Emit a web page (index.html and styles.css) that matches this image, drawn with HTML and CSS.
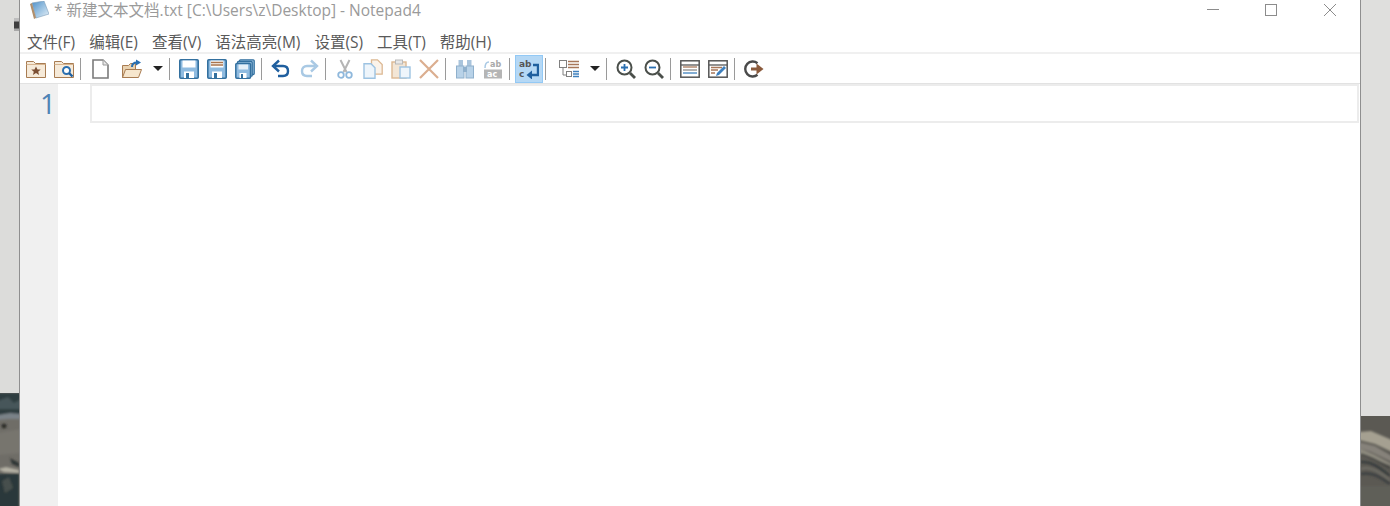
FILE: index.html
```html
<!DOCTYPE html>
<html lang="zh-CN">
<head>
    <meta charset="UTF-8">
    <meta name="viewport" content="width=device-width, initial-scale=1.0">
    <title>Notepad4</title>
    <link rel="stylesheet" href="styles.css">
</head>
<body>
    <div class="desk desk-left">
        <span class="desk-icon"></span>
        <!-- bit of the rocks in the wallpaper -->
        <svg class="rocks" width="19" height="113" viewBox="0 0 19 113">
            <defs><filter id="soft"><feGaussianBlur stdDeviation="1"/></filter></defs>
            <rect width="19" height="113" fill="#6f6d67"/>
            <g filter="url(#soft)">
                <rect x="-2" y="0" width="23" height="22" fill="#2e3c3f"/>
                <path d="M-2 8L8 4L14 10L21 6V16H-2Z" fill="#47565a"/>
                <path d="M-2 22L10 20L21 21V26L8 26L-2 27Z" fill="#7a8288"/>
                <circle cx="4" cy="33" r="2.500" fill="#2e2e2c"/>
                <path d="M-2 40L21 36V60L-2 62Z" fill="#77756e"/>
                <path d="M10 65L19 70V74L12 71Z" fill="#2f3534"/>
                <path d="M-2 76L6 74L19 77V80L4 79Z" fill="#b5b2a5"/>
                <path d="M-2 81L19 80V115H-2Z" fill="#2c393a"/>
                <path d="M2 88L9 84L13 95L5 100Z" fill="#46504d"/>
            </g>
        </svg>
    </div>

    <div class="window">
        <div class="titlebar">
            <svg class="app-icon" viewBox="0 0 20 18">
                <defs>
                    <linearGradient id="page" x1="0" y1="0" x2="1" y2="1">
                        <stop offset="0" stop-color="#4f90c8"/>
                        <stop offset=".6" stop-color="#a9cbe6"/>
                        <stop offset="1" stop-color="#e8f0f7"/>
                    </linearGradient>
                </defs>
                <path d="M3 2L15 0L20 13L7 17Z" fill="url(#page)" stroke="#7b9cb8" stroke-width=".6"/>
                <path d="M1 3L3 2L7 17L5 18Z" fill="#b08f6c"/>
            </svg>
            <span class="title-text">* 新建文本文档.txt [C:\Users\z\Desktop] - Notepad4</span>
            <div class="win-controls">
                <svg class="win-btn win-min" viewBox="0 0 12 12"><path d="M0 5.500H12" stroke="#8c8c8c"/></svg>
                <svg class="win-btn" viewBox="0 0 12 12"><rect x=".5" y=".5" width="11" height="11" fill="none" stroke="#8c8c8c"/></svg>
                <svg class="win-btn" viewBox="0 0 12 12"><path d="M0 0L12 12M12 0L0 12" stroke="#8c8c8c"/></svg>
            </div>
        </div>

        <div class="menubar">
            <span>文件(F)</span>
            <span>编辑(E)</span>
            <span>查看(V)</span>
            <span>语法高亮(M)</span>
            <span>设置(S)</span>
            <span>工具(T)</span>
            <span>帮助(H)</span>
        </div>

        <div class="toolbar">
            <div class="tb-btn">
                <svg class="ico" viewBox="0 0 20 20">
                    <path d="M.5 2.500h7l2 2h10v14H.5z" fill="#f6ead9" stroke="#a87c52"/>
                    <path d="M.5 5.500h19" stroke="#d6b48f"/>
                    <path d="M10 7.500l1.500 3h3.200l-2.500 2.200.9 3.200-3.100-1.800-3.100 1.800.9-3.200-2.500-2.200h3.200z" fill="#7c4f33"/>
                </svg>
            </div>
            <div class="tb-btn">
                <svg class="ico" viewBox="0 0 20 20">
                    <path d="M.5 2.500h7l2 2h10v14H.5z" fill="#f6ead9" stroke="#a87c52"/>
                    <path d="M.5 5.500h19" stroke="#d6b48f"/>
                    <circle cx="12.500" cy="11.500" r="3.500" fill="#fff" stroke="#2a6fb0" stroke-width="2"/>
                    <path d="M15 14l3.500 3.500" stroke="#1f5f9f" stroke-width="2.400"/>
                </svg>
            </div>
            <div class="tb-sep"></div>
            <div class="tb-btn">
                <svg class="ico" viewBox="0 0 20 20">
                    <path d="M3 1h10l5 5v13H3z" fill="#fff" stroke="#7b7b7b" stroke-width="1.600"/>
                    <path d="M13 1v5h5" fill="#e8e8e8" stroke="#9a9a9a"/>
                </svg>
            </div>
            <div class="tb-drop">
                <svg class="ico" viewBox="0 0 20 20">
                    <path d="M.5 6.500h6l2-2h5v14H.5z" fill="#e9d2b0" stroke="#a87c52"/>
                    <path d="M.5 18.500l3-8h16l-3 8z" fill="#f6e6cd" stroke="#a87c52"/>
                    <path d="M10 8c0-3 2-4.500 5-4.500" fill="none" stroke="#2a6fb0" stroke-width="2"/>
                    <path d="M14 .5l5 3-5 3z" fill="#2a6fb0"/>
                </svg>
                <span class="caret"></span>
            </div>
            <div class="tb-sep"></div>
            <div class="tb-btn">
                <svg class="ico" viewBox="0 0 20 20">
                    <rect x=".8" y=".8" width="18.400" height="18.400" rx="1" fill="#8fbbe0" stroke="#33709f" stroke-width="1.600"/>
                    <rect x="3.500" y="1.500" width="13" height="7" fill="#fff"/>
                    <rect x="5" y="12.500" width="10" height="6.500" fill="#fff"/>
                    <rect x="7" y="14" width="3" height="5" fill="#33709f"/>
                </svg>
            </div>
            <div class="tb-btn">
                <svg class="ico" viewBox="0 0 20 20">
                    <rect x=".8" y=".8" width="18.400" height="18.400" rx="1" fill="#8fbbe0" stroke="#33709f" stroke-width="1.600"/>
                    <rect x="3.500" y="1.500" width="13" height="7" fill="#fff"/>
                    <path d="M4 3.500h12M4 6h12" stroke="#a9744e" stroke-width="1.300"/>
                    <rect x="5" y="12.500" width="10" height="6.500" fill="#fff"/>
                    <rect x="7" y="14" width="3" height="5" fill="#33709f"/>
                </svg>
            </div>
            <div class="tb-btn">
                <svg class="ico" viewBox="0 0 20 20">
                    <rect x="4.500" y=".8" width="14.700" height="14.700" rx="1" fill="#a9cbe6" stroke="#33709f" stroke-width="1.300"/>
                    <rect x="2.500" y="2.500" width="14.700" height="14.700" rx="1" fill="#a9cbe6" stroke="#33709f" stroke-width="1.300"/>
                    <rect x=".8" y="4.500" width="14.700" height="14.700" rx="1" fill="#8fbbe0" stroke="#33709f" stroke-width="1.500"/>
                    <rect x="3.500" y="5.500" width="9.500" height="5" fill="#e6f0f8"/>
                    <rect x="4.500" y="14" width="7" height="5" fill="#fff"/>
                    <rect x="6" y="15" width="2" height="4" fill="#33709f"/>
                </svg>
            </div>
            <div class="tb-sep"></div>
            <div class="tb-btn">
                <svg class="ico" viewBox="0 0 20 20">
                    <path d="M4 7h8c3 0 5 2 5 5s-2 5-5 5H7" fill="none" stroke="#1f5f9f" stroke-width="2.400"/>
                    <path d="M8 1.500L2 7l6 5.500" fill="none" stroke="#1f5f9f" stroke-width="2.400"/>
                </svg>
            </div>
            <div class="tb-btn">
                <svg class="ico" viewBox="0 0 20 20">
                    <path d="M16 7H8c-3 0-5 2-5 5s2 5 5 5h5" fill="none" stroke="#a9c9e4" stroke-width="2.400"/>
                    <path d="M12 1.500L18 7l-6 5.500" fill="none" stroke="#a9c9e4" stroke-width="2.400"/>
                </svg>
            </div>
            <div class="tb-sep"></div>
            <div class="tb-btn">
                <svg class="ico" viewBox="0 0 20 20">
                    <path d="M5.500 1l6 12M14.500 1l-6 12" stroke="#b5b5b5" stroke-width="2"/>
                    <circle cx="6" cy="16" r="2.800" fill="#fff" stroke="#8fb8dc" stroke-width="1.800"/>
                    <circle cx="14" cy="16" r="2.800" fill="#fff" stroke="#8fb8dc" stroke-width="1.800"/>
                </svg>
            </div>
            <div class="tb-btn">
                <svg class="ico" viewBox="0 0 20 20">
                    <path d="M8.500 .8h6l4.700 4.700v9.700H8.500z" fill="#fbf3ea" stroke="#dcb893" stroke-width="1.300"/>
                    <path d="M1 4.800h7l4 4v10.400H1z" fill="#eef5fb" stroke="#9dc3e2" stroke-width="1.400"/>
                </svg>
            </div>
            <div class="tb-btn">
                <svg class="ico" viewBox="0 0 20 20">
                    <rect x="1" y="3" width="14" height="16" fill="#f3e6d6" stroke="#dcb893" stroke-width="1.400"/>
                    <rect x="4.500" y="1" width="7" height="4" fill="#e8e8e8" stroke="#b9b9b9"/>
                    <rect x="9" y="8" width="10" height="11" fill="#eef5fb" stroke="#9dc3e2" stroke-width="1.400"/>
                </svg>
            </div>
            <div class="tb-btn">
                <svg class="ico" viewBox="0 0 20 20">
                    <path d="M1 1l18 18M19 1L1 19" stroke="#dbae8f" stroke-width="2.200"/>
                </svg>
            </div>
            <div class="tb-sep"></div>
            <div class="tb-btn">
                <svg class="ico" viewBox="0 0 20 20">
                    <rect x="3.500" y="1" width="4.500" height="6" fill="#a9c4dc"/>
                    <rect x="12" y="1" width="4.500" height="6" fill="#a9c4dc"/>
                    <rect x="1.500" y="7" width="7.500" height="12" fill="#b8d2e8" stroke="#8fb0cc"/>
                    <rect x="11" y="7" width="7.500" height="12" fill="#b8d2e8" stroke="#8fb0cc"/>
                    <rect x="8" y="8" width="4" height="5" fill="#8fb0cc"/>
                </svg>
            </div>
            <div class="tb-btn">
                <svg class="ico" viewBox="0 0 20 20">
                    <text class="ico-text" x="7" y="8" fill="#a9a9a9">ab</text>
                    <path d="M2 9c0-4 1-6 4-6" fill="none" stroke="#a9c9e4" stroke-width="1.500"/>
                    <rect x="1" y="10.500" width="18" height="9" fill="#b5b5b5"/>
                    <text class="ico-text" x="4" y="18" fill="#fff">ac</text>
                </svg>
            </div>
            <div class="tb-sep"></div>
            <div class="tb-btn active">
                <svg class="ico" viewBox="0 0 20 20">
                    <text class="ico-text ico-text-lg" x="0" y="8" fill="#555">ab</text>
                    <text class="ico-text ico-text-lg" x="0" y="18" fill="#555">c</text>
                    <path d="M14 6h5v10h-7" fill="none" stroke="#1f5f9f" stroke-width="2.400"/>
                    <path d="M13 11.500l-5.500 4.500 5.500 4.500z" fill="#1f5f9f"/>
                </svg>
            </div>
            <div class="tb-sep"></div>
            <div class="tb-drop">
                <svg class="ico" viewBox="0 0 20 20">
                    <rect x=".5" y="1.500" width="7" height="7" fill="#fff" stroke="#808080"/>
                    <path d="M4 9v7h3" fill="none" stroke="#808080"/>
                    <rect x="7.500" y="12.500" width="5" height="5" fill="#fff" stroke="#808080"/>
                    <path d="M9 2.500h11M9 5.500h11M9 8.500h11" stroke="#a8775a" stroke-width="1.500"/>
                    <path d="M14 12.500h6M14 15h6M14 17.500h6" stroke="#3f80bd" stroke-width="1.400"/>
                </svg>
                <span class="caret"></span>
            </div>
            <div class="tb-sep"></div>
            <div class="tb-btn">
                <svg class="ico" viewBox="0 0 20 20">
                    <circle cx="8.500" cy="8.500" r="7" fill="#fff" stroke="#4a4f4a" stroke-width="2"/>
                    <path d="M14 14l5 5" stroke="#4a4f4a" stroke-width="2.800"/>
                    <path d="M5 8.500h7M8.500 5v7" stroke="#2a6fb0" stroke-width="1.800"/>
                </svg>
            </div>
            <div class="tb-btn">
                <svg class="ico" viewBox="0 0 20 20">
                    <circle cx="8.500" cy="8.500" r="7" fill="#fff" stroke="#4a4f4a" stroke-width="2"/>
                    <path d="M14 14l5 5" stroke="#4a4f4a" stroke-width="2.800"/>
                    <path d="M5 8.500h7" stroke="#2a6fb0" stroke-width="1.800"/>
                </svg>
            </div>
            <div class="tb-sep"></div>
            <div class="tb-btn">
                <svg class="ico" viewBox="0 0 20 20">
                    <rect x=".8" y="1.800" width="18.400" height="16.400" fill="#fff" stroke="#555" stroke-width="1.500"/>
                    <path d="M1 6h18" stroke="#555" stroke-width="1.300"/>
                    <path d="M3 8h14" stroke="#a8775a" stroke-width="1.300"/>
                    <path d="M3 11h14" stroke="#8a8a8a" stroke-width="1.300"/>
                    <path d="M3 14h14" stroke="#3f80bd" stroke-width="1.300"/>
                </svg>
            </div>
            <div class="tb-btn">
                <svg class="ico" viewBox="0 0 20 20">
                    <rect x=".8" y="1.800" width="18.400" height="16.400" fill="#fff" stroke="#555" stroke-width="1.500"/>
                    <path d="M1 6h18" stroke="#555" stroke-width="1.300"/>
                    <path d="M3 8.500h11M3 11h7M3 14h4" stroke="#a8775a" stroke-width="1.300"/>
                    <path d="M8 17l1-3 7-7 2 2-7 7z" fill="#3f80bd"/>
                </svg>
            </div>
            <div class="tb-sep"></div>
            <div class="tb-btn">
                <svg class="ico" viewBox="0 0 20 20">
                    <path d="M13.500 4.200A7.500 7.500 0 1 0 13.500 15.800" fill="none" stroke="#4a4a4a" stroke-width="2.400"/>
                    <path d="M7 10h6" stroke="#8a5a3c" stroke-width="3"/>
                    <path d="M12.500 4.500l7 5.500-7 5.500z" fill="#8a5a3c"/>
                </svg>
            </div>
        </div>

        <div class="editor">
            <div class="gutter">1</div>
            <div class="text-area">
                <div class="current-line"></div>
            </div>
        </div>
    </div>

    <div class="desk desk-right">
        <svg class="rocks" width="29" height="90" viewBox="0 0 29 90">
            <rect width="29" height="90" fill="#5b5953"/>
            <g filter="url(#soft)">
                <path d="M-2 16L10 15L31 24V36L14 28L-2 24Z" fill="#a5a091"/>
                <path d="M-2 26L14 30L31 40V46L10 36L-2 32Z" fill="#86827a"/>
                <path d="M-2 32L12 38L31 48V50L10 42L-2 38Z" fill="#8f8c80"/>
                <path d="M0 38C8 40 16 44 29 52" fill="none" stroke="#3a3c3a" stroke-width="1.500"/>
                <path d="M0 46C10 45 18 51 29 60" fill="none" stroke="#33383a" stroke-width="2"/>
                <path d="M0 53C8 50 16 54 29 64" fill="none" stroke="#77766e" stroke-width="1.500"/>
                <path d="M0 58C10 56 18 60 29 68" fill="none" stroke="#3c4042" stroke-width="2.500"/>
                <rect x="-2" y="70" width="33" height="22" fill="#5f5e59"/>
            </g>
        </svg>
    </div>
</body>
</html>
```

FILE: styles.css
```css
* {
    margin: 0;
    padding: 0;
    box-sizing: border-box;
}

html, body {
    height: 100%;
    overflow: hidden;
}

body {
    display: flex;
    background: #dcdcda;
    font-family: "Open Sans", "Noto Sans CJK SC", sans-serif;
}

/* desktop wallpaper strips either side of the window */
.desk {
    position: relative;
    height: 100%;
}

.desk-left {
    width: 19px;
    background: #dcdcda;
}

.desk-right {
    flex: 1;
    background: #dfdfdd;
}

.desk-icon {
    position: absolute;
    top: 18px;
    right: 0;
    width: 5px;
    height: 13px;
    background: linear-gradient(180deg, #bdbdbd 0, #bdbdbd 3px, #3f3f3f 4px, #3f3f3f 10px, #a8a8a8 11px);
}

.rocks {
    position: absolute;
    left: 0;
    bottom: 0;
    display: block;
}

.window {
    width: 1342px;
    height: 100%;
    background: #fff;
    border-left: 1px solid #8f8f8f;
    border-right: 1px solid #8f8f8f;
    display: flex;
    flex-direction: column;
}

.titlebar {
    height: 32px;
    display: flex;
    align-items: flex-start;
    padding-left: 9px;
}

.app-icon {
    width: 20px;
    height: 18px;
    margin-top: 1px;
}

.title-text {
    margin-left: 5px;
    font-size: 15.5px;
    line-height: 20px;
    color: #9a9a9a;
    white-space: nowrap;
}

.win-controls {
    margin-left: auto;
    margin-right: 24px;
    margin-top: 4px;
    display: flex;
    gap: 47px;
}

.win-btn {
    width: 12px;
    height: 12px;
}

.win-min {
    margin-right: -1px;
}

.menubar {
    height: 22px;
    display: flex;
    gap: 14px;
    padding-left: 7px;
    font-size: 15.5px;
    line-height: 20px;
    color: #5a5a5a;
    border-bottom: 2px solid #f0f0f0;
    white-space: nowrap;
}

.toolbar {
    height: 30px;
    padding-left: 2px;
    display: flex;
    align-items: center;
    border-bottom: 1px solid #e2e2e2;
}

.tb-btn {
    width: 28px;
    height: 28px;
    display: flex;
    align-items: center;
    justify-content: center;
}

.tb-btn.active {
    background: #b5d8f5;
    border: 1px solid #93c9f5;
}

.tb-drop {
    width: 49px;
    height: 28px;
    margin-left: 4px;
    padding-left: 4px;
    display: flex;
    align-items: center;
}

.caret {
    width: 0;
    height: 0;
    margin-left: 11px;
    border-left: 5px solid transparent;
    border-right: 5px solid transparent;
    border-top: 5px solid #222;
}

.tb-sep {
    width: 1px;
    height: 22px;
    margin: 0 5px 0 2px;
    background: #9a9a9a;
}

.ico {
    width: 20px;
    height: 20px;
    display: block;
    flex-shrink: 0;
}

.ico-text {
    font-family: "DejaVu Sans", sans-serif;
    font-size: 8px;
    font-weight: bold;
}

.ico-text-lg {
    font-size: 9px;
}

.editor {
    flex: 1;
    display: flex;
}

.gutter {
    width: 38px;
    background: #f0f0f0;
    padding-right: 2px;
    text-align: right;
    font-size: 28px;
    line-height: 38px;
    color: #4f83b5;
}

.text-area {
    flex: 1;
    padding: 0 1px 0 32px;
}

.current-line {
    height: 39px;
    border: 2px solid #ececec;
}
```
